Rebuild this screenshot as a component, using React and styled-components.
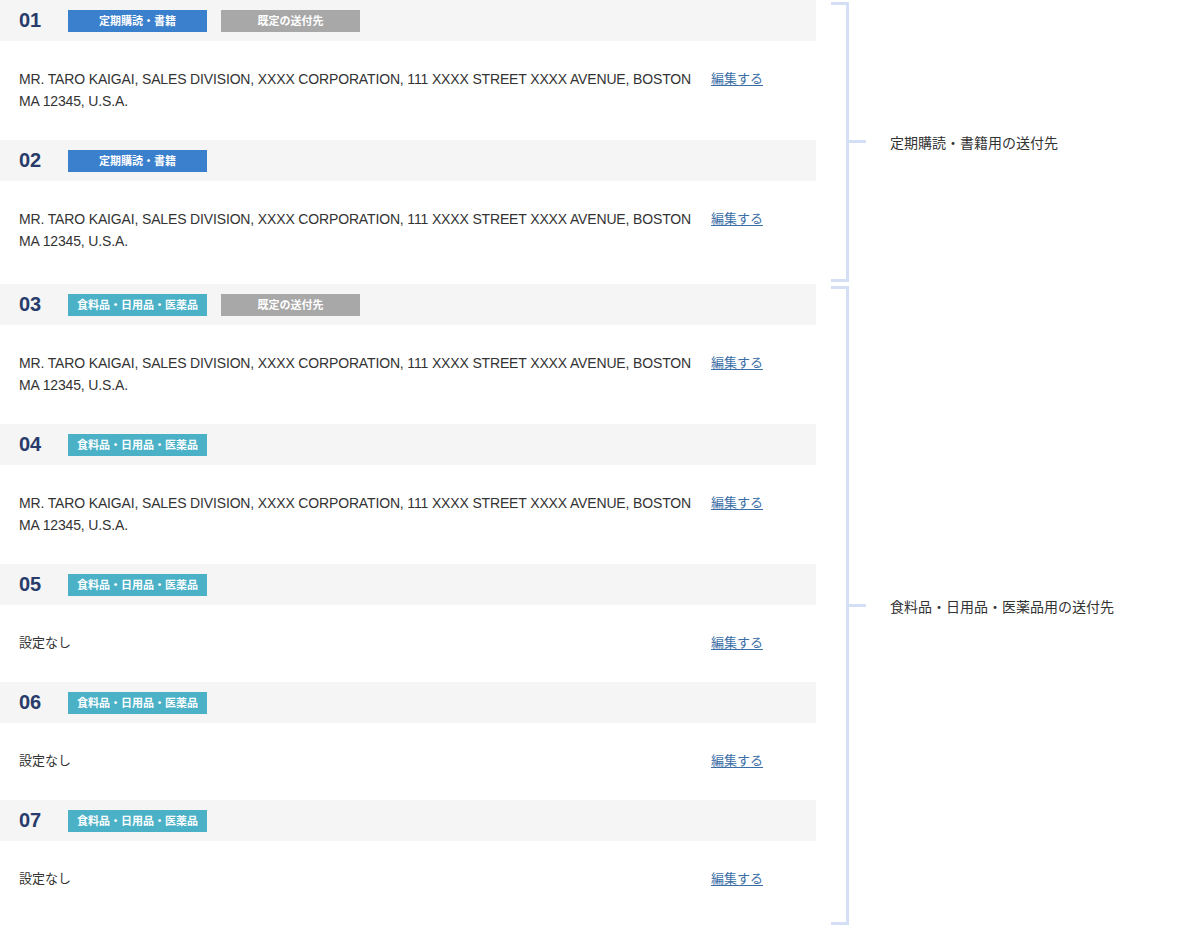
import React from 'react';
import styled, { createGlobalStyle } from 'styled-components';

const GlobalStyle = createGlobalStyle`
  body {
    margin: 0;
    background: #fff;
    font-family: "Liberation Sans", "Noto Sans CJK JP", sans-serif;
    color: #333;
  }
`;

const Page = styled.main`
  display: flex;
  flex-direction: column;
  gap: 4px;
  width: 1200px;
  padding-bottom: 16px;
`;

const Group = styled.section`
  display: grid;
  grid-template-columns: 816px 18px 1fr;
  column-gap: 15px;
`;

const List = styled.div`
  display: flex;
  flex-direction: column;
`;

const BracketCol = styled.div`
  display: flex;
  flex-direction: column;
  padding-top: 2px;
  margin-bottom: ${({ $tail }) => -$tail}px;
`;

const Bracket = styled.div`
  position: relative;
  flex: 1;
  border: 3px solid #d4def4;
  border-left: none;
  &:after {
    content: '';
    position: absolute;
    left: 100%;
    top: 50%;
    width: 20px;
    height: 3px;
    margin-top: -2px;
    background: #d4def4;
  }
`;

const Label = styled.div`
  display: flex;
  align-items: center;
  padding-left: 26px;
  margin-bottom: ${({ $tail }) => -$tail}px;
  padding-top: 2px;
  font-size: 14px;
  color: #333;
`;

const Head = styled.div`
  display: flex;
  align-items: center;
  height: 41px;
  padding-left: 19px;
  background: #f5f5f5;
`;

const Num = styled.span`
  width: 49px;
  font-size: 20px;
  font-weight: 700;
  color: #283b6a;
`;

const Tags = styled.div`
  display: flex;
  gap: 14px;
`;

const colors = {
  book: '#3a80cd',
  food: '#4bb1c7',
  def: '#a8a8a8',
};

const Tag = styled.span`
  width: 139px;
  height: 22px;
  line-height: 22px;
  text-align: center;
  background: ${({ $kind }) => colors[$kind]};
  color: #fff;
  font-size: 11px;
  font-weight: 700;
`;

const Body = styled.div`
  display: grid;
  grid-template-columns: 682px auto;
  column-gap: 10px;
  align-items: center;
  padding: 27px 19px 28px;
`;

const Addr = styled.p`
  margin: 0;
  font-size: ${({ $empty }) => ($empty ? 13 : 14)}px;
  letter-spacing: ${({ $empty }) => ($empty ? 0 : -0.15)}px;
  line-height: 22px;
  color: #333;
`;

const Edit = styled.a`
  align-self: start;
  font-size: 13px;
  line-height: 22px;
  color: #3b6ea6;
  text-decoration: underline;
  text-underline-offset: 2px;
`;

const ADDR =
  'MR. TARO KAIGAI, SALES DIVISION, XXXX CORPORATION, 111 XXXX STREET XXXX AVENUE, BOSTON MA 12345, U.S.A.';

const groups = [
  {
    label: '定期購読・書籍用の送付先',
    tail: 2,
    items: [
      { no: '01', kind: 'book', def: true, addr: ADDR },
      { no: '02', kind: 'book', addr: ADDR },
    ],
  },
  {
    label: '食料品・日用品・医薬品用の送付先',
    tail: 7,
    items: [
      { no: '03', kind: 'food', def: true, addr: ADDR },
      { no: '04', kind: 'food', addr: ADDR },
      { no: '05', kind: 'food' },
      { no: '06', kind: 'food' },
      { no: '07', kind: 'food' },
    ],
  },
];

const tagText = {
  book: '定期購読・書籍',
  food: '食料品・日用品・医薬品',
};

const App = () => (
  <>
    <GlobalStyle />
    <Page>
      {groups.map(g => (
        <Group key={g.label}>
          <List>
            {g.items.map(item => (
              <div key={item.no}>
                <Head>
                  <Num>{item.no}</Num>
                  <Tags>
                    <Tag $kind={item.kind}>{tagText[item.kind]}</Tag>
                    {item.def && <Tag $kind="def">既定の送付先</Tag>}
                  </Tags>
                </Head>
                <Body>
                  <Addr $empty={!item.addr}>{item.addr || '設定なし'}</Addr>
                  <Edit href="#">編集する</Edit>
                </Body>
              </div>
            ))}
          </List>
          <BracketCol $tail={g.tail}>
            <Bracket />
          </BracketCol>
          <Label $tail={g.tail}>{g.label}</Label>
        </Group>
      ))}
    </Page>
  </>
);

export default App;
